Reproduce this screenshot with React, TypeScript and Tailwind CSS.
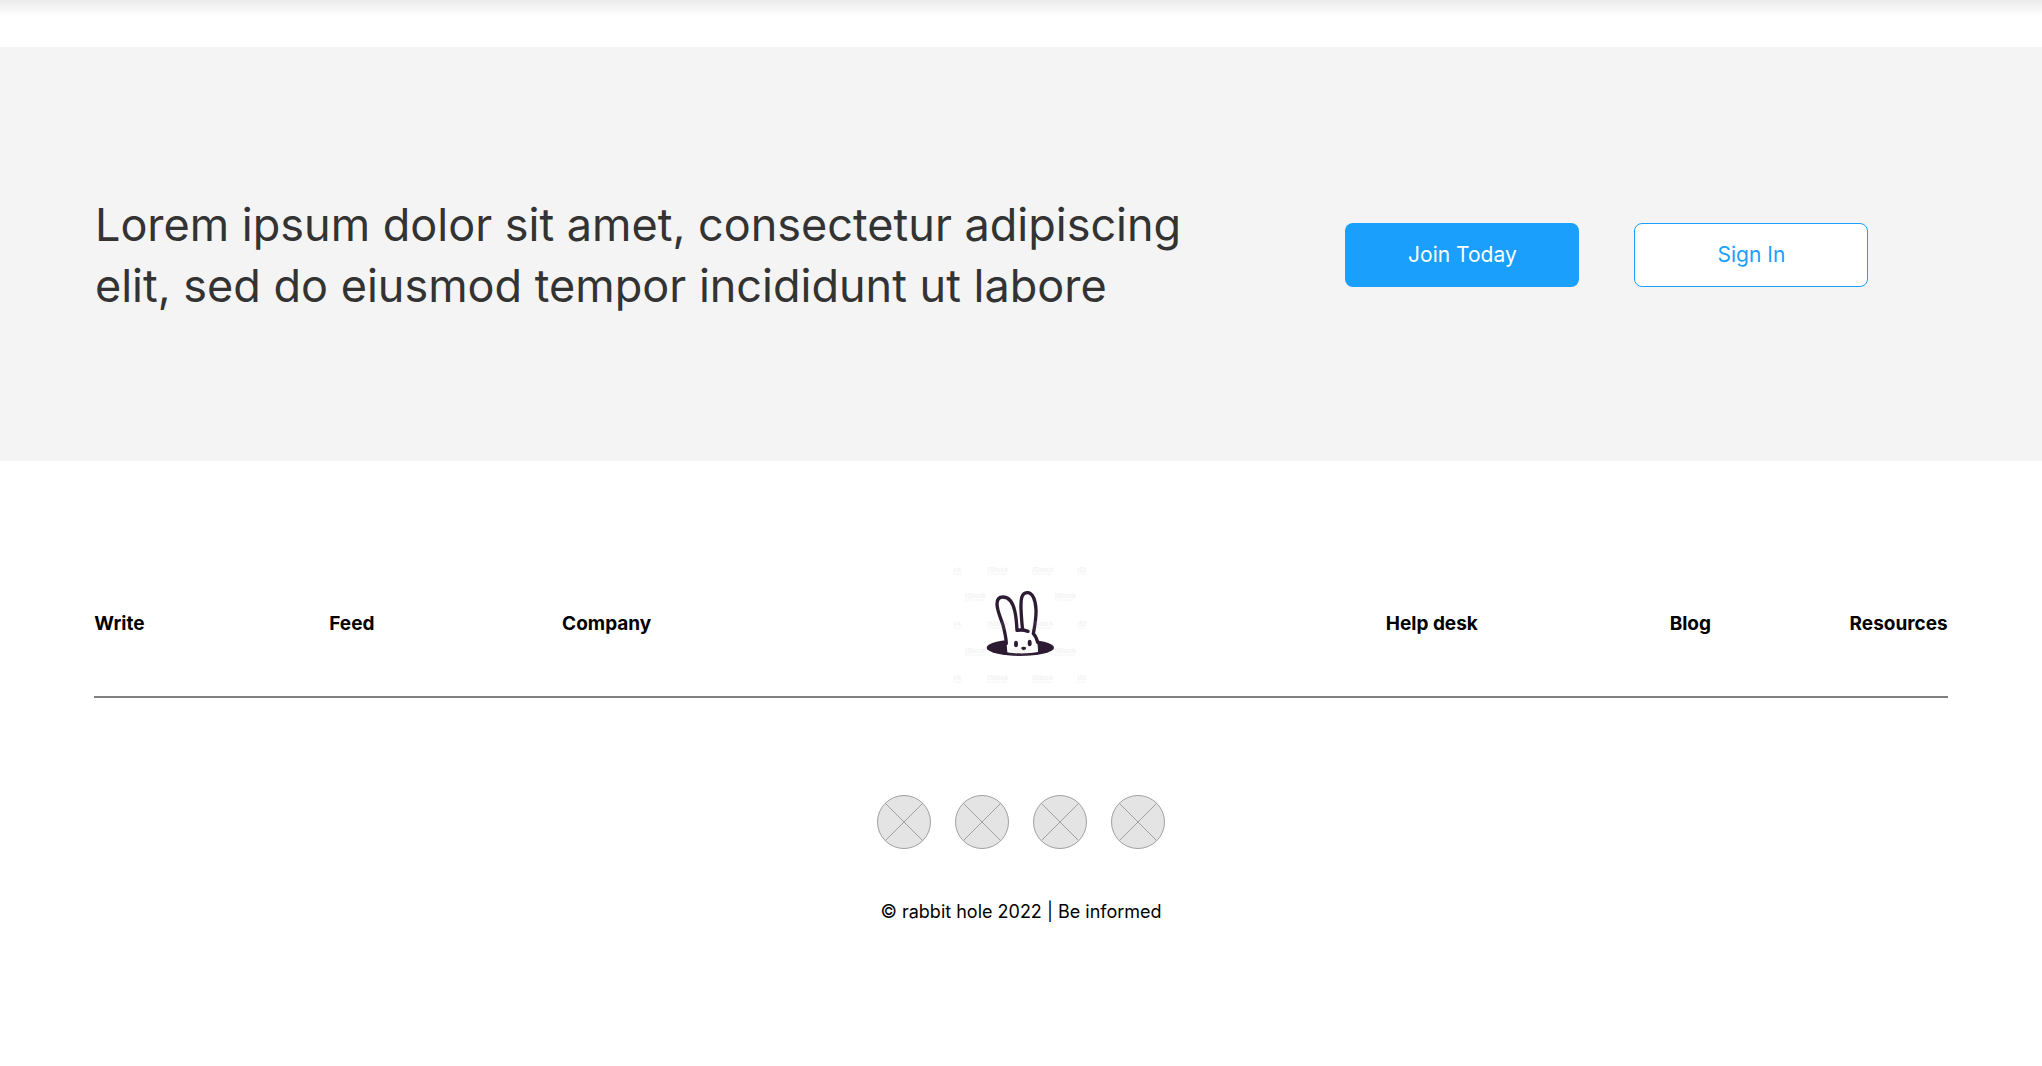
const leftLinks = ['Write', 'Feed', 'Company'];
const rightLinks = ['Help desk', 'Blog', 'Resources'];
const socials = ['Social profile 1', 'Social profile 2', 'Social profile 3', 'Social profile 4'];

type Mark = { x: number; y: number; top: string; bottom: string };

const full = (x: number, y: number): Mark => ({ x, y, top: 'iStock', bottom: 'by Getty Images' });

const wideRow = (y: number): Mark[] => [
  { x: 40, y, top: 'ck', bottom: 'Images' },
  full(142, y),
  full(277, y),
  { x: 412, y, top: 'iSt', bottom: 'by Get' },
];

const marks: Mark[] = [
  ...wideRow(45),
  full(75, 125),
  full(345, 125),
  ...wideRow(207),
  full(75, 290),
  full(210, 290),
  full(345, 290),
  ...wideRow(370),
];

function RabbitLogo() {
  return (
    <svg viewBox="39 39 405 360" className="h-[120px] w-[135px]" role="img" aria-label="rabbit hole">
      <ellipse cx="241" cy="290" rx="101" ry="25" fill="#2d1b33" />
      <path
        d="M202 304C201 277 196 252 191 233C185 210 171 180 171 159C171 144 178 138 189 138C208 138 219 158 224 179C229 199 230 218 231 239L249 239C246 218 244 195 243 173C242 142 245 126 261 125C278 124 287 148 288 176C289 202 284 226 280 247C290 260 294 277 294 303C272 308 226 309 202 304Z"
        fill="#fff"
      />
      <path
        d="M199 277C198 258 194 242 190 226C184 204 171 180 171 159C171 144 178 138 189 138C208 138 219 158 224 179C229 199 230 218 231 238C242 236 253 237 264 241M248 236C245 216 244 195 243 173C242 142 245 126 261 125C278 124 287 148 288 176C289 202 284 226 280 248C286 254 290 262 293 274"
        fill="none"
        stroke="#2d1b33"
        strokeWidth="10"
        strokeLinecap="round"
        strokeLinejoin="round"
      />
      <ellipse cx="228" cy="279" rx="6" ry="10" fill="#2d1b33" />
      <ellipse cx="269" cy="276" rx="6" ry="10" fill="#2d1b33" />
      <path d="M243 290Q251 285 259 290Q258 297 251 298Q245 297 243 290Z" fill="#2d1b33" />
      <g fill="#c4c4c4" opacity="0.22" fontFamily="Liberation Sans, sans-serif" aria-hidden="true">
        {marks.map(({ x, y, top, bottom }) => (
          <g key={`${x}-${y}`}>
            <text x={x} y={y + 17} fontSize="21" fontWeight="700">{top}</text>
            <text x={x} y={y + 26} fontSize="8">{bottom}</text>
          </g>
        ))}
      </g>
    </svg>
  );
}

function NavLink({ label }: { label: string }) {
  return (
    <a href="#" className="justify-self-start whitespace-nowrap text-[19px] leading-7 font-bold text-black">
      {label}
    </a>
  );
}

export default function App() {
  return (
    <div className="min-h-screen bg-white font-[Inter,sans-serif]">
      <div className="h-[47px]">
        <div className="h-4 bg-linear-to-b from-[#ebebeb] to-white" />
      </div>

      <section className="flex items-center justify-between bg-[#f4f4f4] pt-[147px] pr-[8.5%] pb-[145px] pl-[4.65%]">
        <h2 className="text-[45px] leading-[61px] font-normal text-[#333333]">
          Lorem ipsum dolor sit amet, consectetur adipiscing
          <br />
          elit, sed do eiusmod tempor incididunt ut labore
        </h2>
        <div className="flex shrink-0 gap-[55px]">
          <button type="button" className="h-16 w-[234px] rounded-lg bg-[#1a9ffc] text-[21px] text-white">
            Join Today
          </button>
          <button type="button" className="h-16 w-[234px] rounded-lg border border-[#1a9ffc] bg-white text-[21px] text-[#1a9ffc]">
            Sign In
          </button>
        </div>
      </section>

      <footer className="px-[4.62%] pt-[103px]">
        <nav
          aria-label="Footer"
          className="grid grid-cols-[235fr_233fr_391fr_433fr_284fr_180fr_97fr] items-center border-b-2 border-[#808080] pb-3"
        >
          {leftLinks.map((label) => <NavLink key={label} label={label} />)}
          <RabbitLogo />
          {rightLinks.map((label) => <NavLink key={label} label={label} />)}
        </nav>

        <div className="mt-[97px] flex justify-center gap-6">
          {socials.map((label) => (
            <a key={label} href="#" aria-label={label}>
              <svg viewBox="0 0 54 54" className="size-[54px]" fill="none" stroke="#a0a0a0">
                <circle cx="27" cy="27" r="26.5" fill="#e4e4e4" />
                <path d="M8.3 8.3L45.7 45.7M45.7 8.3L8.3 45.7" />
              </svg>
            </a>
          ))}
        </div>
        <p className="mt-[49px] text-center text-lg text-black">© rabbit hole 2022 | Be informed</p>
      </footer>
    </div>
  );
}
